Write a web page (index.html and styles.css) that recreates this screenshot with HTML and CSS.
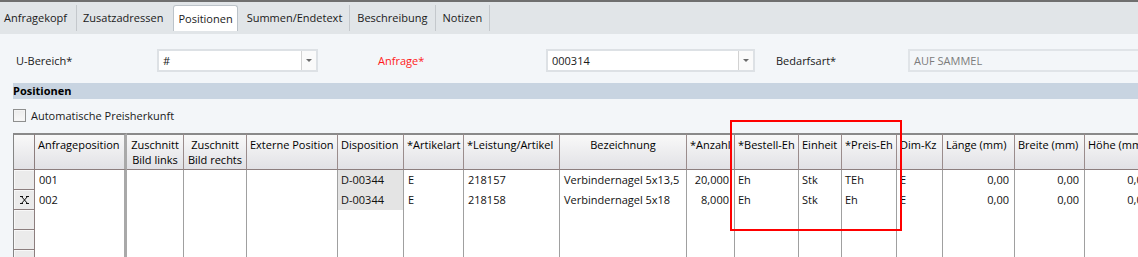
FILE: index.html
```html
<!DOCTYPE html>
<html lang="de">
<head>
    <meta charset="UTF-8">
    <title>Anfrage - Positionen</title>
    <link rel="stylesheet" href="styles.css">
</head>
<body>
    <!-- Tabs -->
    <div class="tabbar">
        <div class="tab first">Anfragekopf</div>
        <div class="tab before-active">Zusatzadressen</div>
        <div class="tab active">Positionen</div>
        <div class="tab">Summen/Endetext</div>
        <div class="tab">Beschreibung</div>
        <div class="tab">Notizen</div>
    </div>

    <!-- Kopfdaten -->
    <div class="form-row">
        <label class="lbl lbl-bereich">U-Bereich*</label>
        <div class="combo combo-bereich">
            <span class="value">#</span>
            <span class="drop"><i class="arrow"></i></span>
        </div>
        <label class="lbl lbl-anfrage required">Anfrage*</label>
        <div class="combo combo-anfrage">
            <span class="value">000314</span>
            <span class="drop"><i class="arrow"></i></span>
        </div>
        <label class="lbl lbl-bedarf">Bedarfsart*</label>
        <div class="field-disabled">AUF SAMMEL</div>
    </div>

    <div class="section-title">Positionen</div>

    <div class="check-row">
        <span class="checkbox"></span>
        <span>Automatische Preisherkunft</span>
    </div>

    <!-- Positionsgrid -->
    <div class="grid">
        <div class="hd ind"></div>
        <div class="hd frozen">Anfrageposition</div>
        <div class="hd center">Zuschnitt<br>Bild links</div>
        <div class="hd center">Zuschnitt<br>Bild rechts</div>
        <div class="hd">Externe Position</div>
        <div class="hd">Disposition</div>
        <div class="hd">*Artikelart</div>
        <div class="hd">*Leistung/Artikel</div>
        <div class="hd center">Bezeichnung</div>
        <div class="hd">*Anzahl</div>
        <div class="hd">*Bestell-Eh</div>
        <div class="hd">Einheit</div>
        <div class="hd">*Preis-Eh</div>
        <div class="hd">Dim-Kz</div>
        <div class="hd">Länge (mm)</div>
        <div class="hd">Breite (mm)</div>
        <div class="hd">Höhe (mm)</div>

        <div class="c ind"></div>
        <div class="c frozen dot">001</div>
        <div class="c"></div>
        <div class="c"></div>
        <div class="c"></div>
        <div class="c dispo">D-00344</div>
        <div class="c">E</div>
        <div class="c">218157</div>
        <div class="c">Verbindernagel 5x13,5</div>
        <div class="c num">20,000</div>
        <div class="c tight">Eh</div>
        <div class="c tight">Stk</div>
        <div class="c tight">TEh</div>
        <div class="c tight">E</div>
        <div class="c num">0,00</div>
        <div class="c num">0,00</div>
        <div class="c num">0,00</div>

        <div class="c ind">
            <svg class="edit-mark" width="9" height="8" viewBox="0 0 9 8">
                <path d="M1.5 0.5 L7.5 7.5 M7.5 0.5 L1.5 7.5 M0 0.5 H3 M6 0.5 H9 M0 7.5 H3 M6 7.5 H9" stroke="#111" stroke-width="1" fill="none"/>
            </svg>
        </div>
        <div class="c frozen dot">002</div>
        <div class="c"></div>
        <div class="c"></div>
        <div class="c"></div>
        <div class="c dispo">D-00344</div>
        <div class="c">E</div>
        <div class="c">218158</div>
        <div class="c">Verbindernagel 5x18</div>
        <div class="c num">8,000</div>
        <div class="c tight">Eh</div>
        <div class="c tight">Stk</div>
        <div class="c tight">Eh</div>
        <div class="c tight">E</div>
        <div class="c num">0,00</div>
        <div class="c num">0,00</div>
        <div class="c num">0,00</div>

        <div class="c ind"></div><div class="c frozen"></div><div class="c"></div><div class="c"></div><div class="c"></div><div class="c"></div><div class="c"></div><div class="c"></div><div class="c"></div><div class="c"></div><div class="c"></div><div class="c"></div><div class="c"></div><div class="c"></div><div class="c"></div><div class="c"></div><div class="c"></div>
        <div class="c ind"></div><div class="c frozen"></div><div class="c"></div><div class="c"></div><div class="c"></div><div class="c"></div><div class="c"></div><div class="c"></div><div class="c"></div><div class="c"></div><div class="c"></div><div class="c"></div><div class="c"></div><div class="c"></div><div class="c"></div><div class="c"></div><div class="c"></div>
        <div class="c ind"></div><div class="c frozen"></div><div class="c"></div><div class="c"></div><div class="c"></div><div class="c"></div><div class="c"></div><div class="c"></div><div class="c"></div><div class="c"></div><div class="c"></div><div class="c"></div><div class="c"></div><div class="c"></div><div class="c"></div><div class="c"></div><div class="c"></div>
    </div>

    <!-- Markierung -->
    <div class="highlight"></div>
</body>
</html>
```

FILE: styles.css
```css
* {
    box-sizing: border-box;
}

body {
    margin: 0;
    width: 1138px;
    height: 257px;
    overflow: hidden;
    position: relative;
    background: #f3f6f9;
    font-family: 'Open Sans', 'Liberation Sans', sans-serif;
    font-size: 11px;
    color: #1a1a1a;
}

/* Tabs */
.tabbar {
    display: flex;
    align-items: center;
    height: 34px;
    border-top: 2px solid #6f6f6f;
    background: #e1e5e8;
}

.tab {
    height: 26px;
    line-height: 26px;
    padding: 0 7px 0 7px;
    border-right: 1px solid #c4c8cc;
}

.tab.first {
    padding-left: 4px;
    padding-right: 9px;
}

.tab.before-active {
    border-right: none;
    padding-left: 6px;
    padding-right: 10px;
}

.tab.active {
    background: #fff;
    border: 1px solid #bcc3c9;
    border-bottom: none;
    border-radius: 3px 3px 0 0;
    padding: 0 4px;
    margin-right: 2px;
}

/* Kopfdaten */
.form-row {
    display: flex;
    align-items: center;
    padding: 15px 0 0 16px;
}

.lbl,
.combo {
    flex: none;
}

.lbl-bereich {
    width: 141px;
}

.lbl-anfrage {
    width: 168px;
    margin-left: 60px;
}

.lbl-bedarf {
    width: 132px;
    margin-left: 21px;
}

.required {
    color: #ff1a1a;
}

.combo {
    display: flex;
    height: 23px;
    border: 2px solid #dde1e5;
    background: #fff;
}

.combo-bereich {
    width: 161px;
}

.combo-anfrage {
    width: 209px;
}

.combo .value {
    flex: 1;
    padding-left: 4px;
    line-height: 19px;
}

.combo .drop {
    width: 15px;
    border-left: 1px solid #d2d2d2;
    background: #fafafa;
    display: flex;
    align-items: center;
    justify-content: center;
}

.arrow {
    border-left: 3px solid transparent;
    border-right: 3px solid transparent;
    border-top: 3px solid #6a6a6a;
}

.field-disabled {
    flex: none;
    width: 260px;
    height: 23px;
    line-height: 19px;
    padding-left: 4px;
    border: 2px solid #e0e4e8;
    color: #7c7c7c;
}

.section-title {
    margin: 11px 0 0 13px;
    height: 16px;
    line-height: 16px;
    background: #c8d4e1;
    font-weight: bold;
    color: #000;
}

.check-row {
    display: flex;
    align-items: center;
    gap: 5px;
    margin: 10px 0 0 13px;
    height: 13px;
}

.checkbox {
    width: 13px;
    height: 13px;
    border: 1px solid #8e8f8f;
    background: linear-gradient(#ececec, #f8f8f8);
    box-shadow: inset 0 0 0 1px #f4f4f4;
}

/* Grid */
.grid {
    display: grid;
    grid-template-columns: 22px 92px 57px 63px 91px 66px 60px 96px 127px 48px 64px 43px 55px 46px 72px 70px 70px;
    grid-template-rows: 37px repeat(5, 20px);
    width: 1155px;
    margin: 11px 0 0 13px;
}

.hd {
    border-top: 2px solid #8a8a8a;
    border-bottom: 1px solid #8c7e7e;
    border-right: 1px solid #9a8c8c;
    background: linear-gradient(#f9f9f9, #e1e1e5);
    padding: 2px 3px 0;
    line-height: 15px;
    color: #000;
    white-space: nowrap;
    overflow: hidden;
}

.hd.center {
    text-align: center;
}

.c {
    border-right: 1px solid #a0a0a0;
    background: #fff;
    padding: 0 4px;
    line-height: 20px;
    white-space: nowrap;
    overflow: hidden;
    color: #111;
}

.ind {
    border-left: 1px solid #858585;
    border-right: 1px solid #8c7e7e;
}

.c.ind {
    border-bottom: 1px solid #8c7e7e;
    background: #ebebeb;
    box-shadow: inset 1px 1px 0 #f8f8f8;
    display: flex;
    align-items: center;
    justify-content: center;
    padding: 0;
}

.frozen {
    border-right: 3px solid #a9a9a9;
}

.c.dot {
    background: #fff linear-gradient(#222, #222) no-repeat right 1px bottom 1px / 2px 3px;
    background-origin: border-box;
}

.c.dispo {
    background: #e4e4e4;
    padding-left: 3px;
}

.c.tight {
    padding-left: 3px;
}

.c.num {
    text-align: right;
    padding-right: 5px;
}

.edit-mark {
    display: block;
}

/* rote Markierung */
.highlight {
    position: absolute;
    left: 730px;
    top: 120px;
    width: 172px;
    height: 111px;
    border: 2px solid #ff0000;
}
```
